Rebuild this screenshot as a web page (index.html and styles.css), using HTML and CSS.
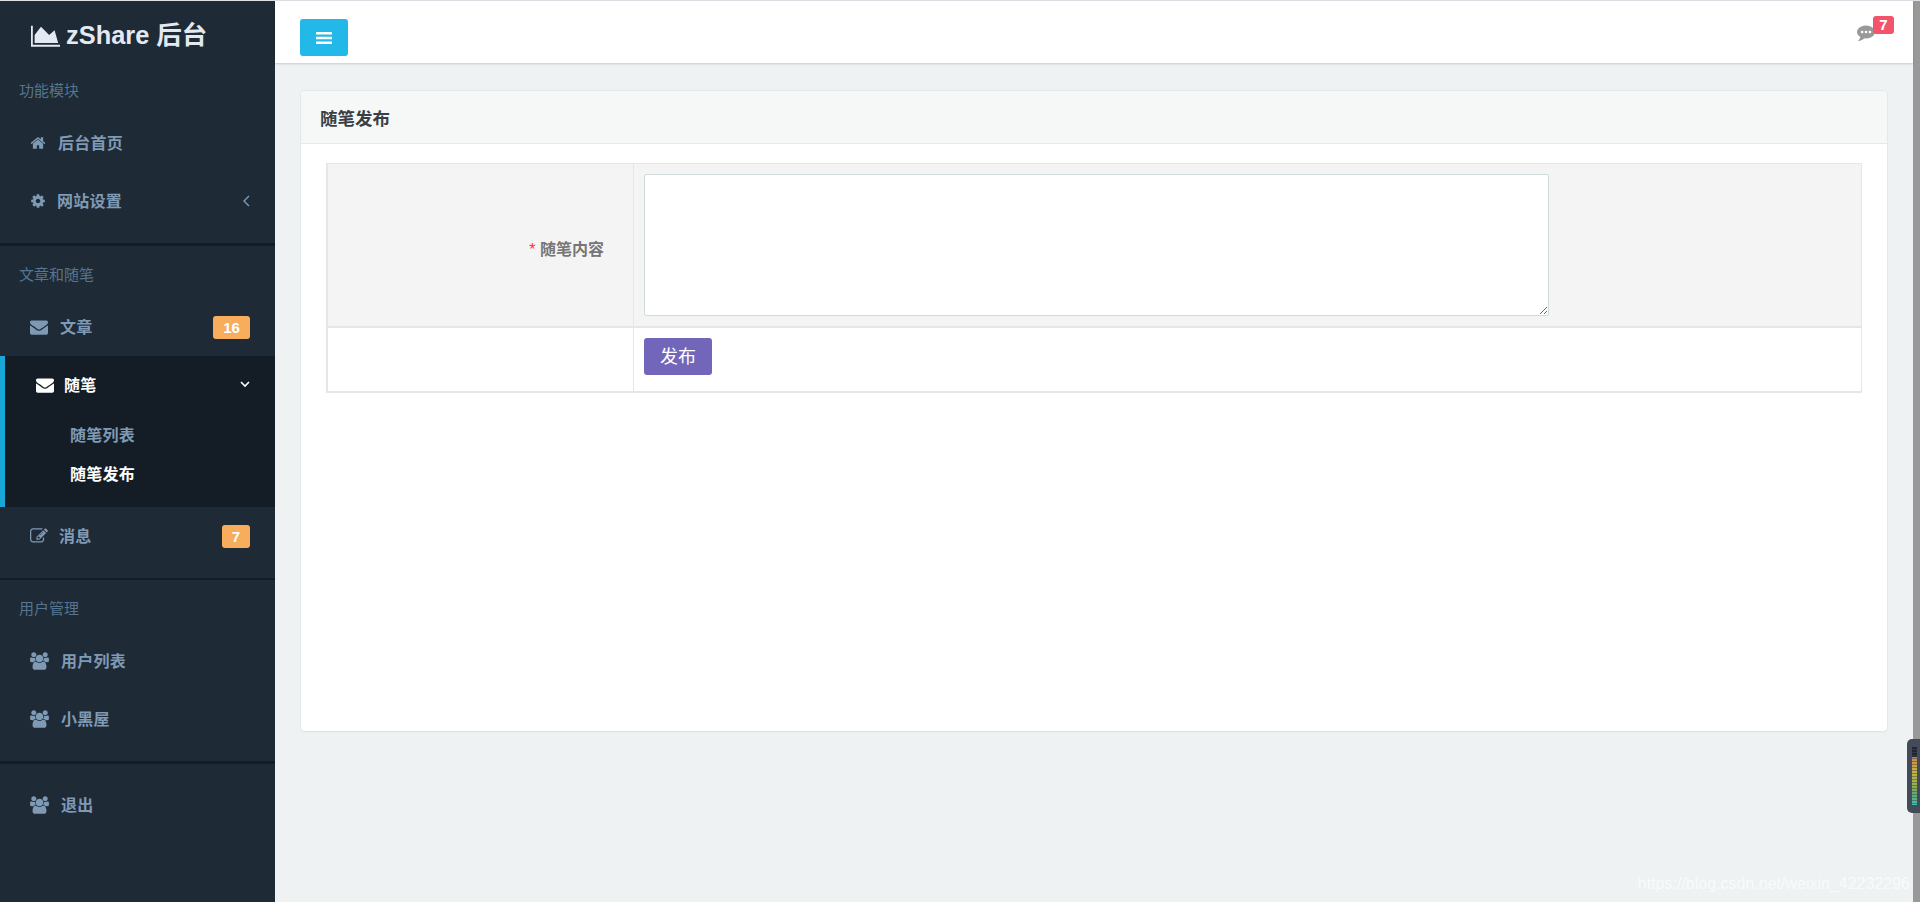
FILE: index.html
```html
<!DOCTYPE html>
<html lang="zh-CN">
<head>
<meta charset="utf-8">
<title>zShare 后台</title>
<link rel="stylesheet" href="styles.css">
</head>
<body>
<div class="page">
  <aside class="sidebar">
    <div class="logo">
      <svg class="logo-icon" viewBox="0 0 2048 1792"><path fill="currentColor" d="M2048 1536v128H0V192h128v1344h1920zm-384-1024l256 896H256V832l448-576 576 576 384-320z"/></svg>
      <span class="logo-text">zShare 后台</span>
    </div>
    <section class="nav-section">
      <div class="nav-label">功能模块</div>
      <a class="nav-item"><svg class="ic ic-home" viewBox="0 0 1792 1792"><use href="#i-home"/></svg><span class="nav-text">后台首页</span></a>
      <a class="nav-item"><svg class="ic ic-cog" viewBox="0 0 1792 1792"><use href="#i-cog"/></svg><span class="nav-text">网站设置</span>
        <svg class="chev-left" viewBox="0 0 7 12"><path d="M6 1 1 6l5 5"/></svg></a>
    </section>
    <section class="nav-section">
      <div class="nav-label">文章和随笔</div>
      <a class="nav-item"><svg class="ic ic-env" viewBox="0 0 1792 1792"><use href="#i-env"/></svg><span class="nav-text">文章</span><b class="badge badge-wide">16</b></a>
      <div class="nav-group">
        <a class="nav-item nav-head"><svg class="ic ic-env" viewBox="0 0 1792 1792"><use href="#i-env"/></svg><span class="nav-text">随笔</span>
          <svg class="chev-down" viewBox="0 0 10 7"><path d="M1 1l4 4 4-4"/></svg></a>
        <a class="sub-item">随笔列表</a>
        <a class="sub-item sub-current">随笔发布</a>
      </div>
      <a class="nav-item"><svg class="ic ic-edit" viewBox="0 0 1792 1792"><use href="#i-edit"/></svg><span class="nav-text">消息</span><b class="badge">7</b></a>
    </section>
    <section class="nav-section nav-section-thin">
      <div class="nav-label">用户管理</div>
      <a class="nav-item"><svg class="ic ic-users" viewBox="0 0 1920 1792"><use href="#i-users"/></svg><span class="nav-text">用户列表</span></a>
      <a class="nav-item"><svg class="ic ic-users" viewBox="0 0 1920 1792"><use href="#i-users"/></svg><span class="nav-text">小黑屋</span></a>
    </section>
    <section class="nav-last">
      <a class="nav-item"><svg class="ic ic-users" viewBox="0 0 1920 1792"><use href="#i-users"/></svg><span class="nav-text">退出</span></a>
    </section>
  </aside>

  <div class="content">
    <header class="topbar">
      <button class="menu-btn" type="button"><svg viewBox="0 0 16 12"><path d="M0 0h16v2.400H0zM0 4.800h16v2.400H0zM0 9.600h16V12H0z"/></svg></button>
      <div class="notice">
        <svg class="notice-icon" viewBox="0 0 1792 1792"><path fill-rule="evenodd" d="M640 896q0-53-37.500-90.500t-90.500-37.500-90.500 37.500-37.500 90.500 37.500 90.500 90.500 37.500 90.500-37.500 37.500-90.500zm384 0q0-53-37.500-90.500t-90.500-37.500-90.500 37.500-37.500 90.500 37.500 90.500 90.500 37.500 90.500-37.500 37.500-90.500zm384 0q0-53-37.500-90.500t-90.500-37.500-90.500 37.500-37.500 90.500 37.500 90.500 90.500 37.500 90.500-37.500 37.500-90.500zm384 0q0 174-120 321.500t-326 233-450 85.500q-70 0-145-8-198 175-460 242-49 14-114 22h-5q-15 0-27-10.500t-16-27.500v-1q-3-4-.5-12t2-10 4.500-9.500l6-9 7-8.500 8-9q7-8 31-34.500t34.500-38 31-39.500 32.500-51 27-59 26-76q-157-89-247.500-220t-90.500-281q0-174 120-321.500t326-233 450-85.500 450 85.500 326 233 120 321.500z"/></svg>
        <b class="notice-badge">7</b>
      </div>
    </header>
    <main class="main">
      <div class="card">
        <div class="card-head">随笔发布</div>
        <div class="card-body">
          <table class="form-table">
            <tr class="row-shaded">
              <td class="cell-label"><i class="req">*</i> 随笔内容</td>
              <td class="cell-field"><textarea class="field-text"></textarea></td>
            </tr>
            <tr class="row-action">
              <td class="cell-label"></td>
              <td class="cell-field"><button class="submit-btn" type="button">发布</button></td>
            </tr>
          </table>
        </div>
      </div>
    </main>
  </div>
  <div class="scroll-strip"></div>
</div>

<div class="meter"><div class="meter-bars"></div></div>
<div class="watermark">https://blog.csdn.net/weixin_42232296</div>

<svg class="sprite" aria-hidden="true">
  <defs>
    <path id="i-home" fill="currentColor" d="M1472 992v480q0 26-19 45t-45 19h-384v-384h-256v384h-384q-26 0-45-19t-19-45v-480q0-1 .5-3t.5-3l575-474 575 474q1 2 1 6zm223-69l-62 74q-8 9-21 11h-3q-13 0-21-7l-692-577-692 577q-12 8-24 7-13-2-21-11l-62-74q-8-10-7-23.500t11-21.500l719-599q32-26 76-26t76 26l244 204v-195q0-14 9-23t23-9h192q14 0 23 9t9 23v408l219 182q10 8 11 21.500t-7 23.500z"/>
    <path id="i-cog" fill="currentColor" d="M1152 896q0-106-75-181t-181-75-181 75-75 181 75 181 181 75 181-75 75-181zm512-109v222q0 12-8 23t-20 13l-185 28q-19 54-39 91 35 50 107 138 10 12 10 25t-9 23q-27 37-99 108t-94 71q-12 0-26-9l-138-108q-44 23-91 38-16 136-29 186-7 28-36 28h-222q-14 0-24.500-8.500t-11.500-21.500l-28-184q-49-16-90-37l-141 107q-10 9-25 9-14 0-25-11-126-114-165-168-7-10-7-23 0-12 8-23 15-21 51-66.500t54-70.500q-27-50-41-99l-183-27q-13-2-21-12.500t-8-23.500v-222q0-12 8-23t19-13l186-28q14-46 39-92-40-57-107-138-10-12-10-24 0-10 9-23 26-36 98.500-107.500t94.500-71.500q13 0 26 10l138 107q44-23 91-38 16-136 29-186 7-28 36-28h222q14 0 24.500 8.500t11.500 21.500l28 184q49 16 90 37l142-107q9-9 24-9 13 0 25 10 129 119 165 170 7 8 7 22 0 12-8 23-15 21-51 66.500t-54 70.500q26 50 41 98l183 28q13 2 21 12.500t8 23.500z"/>
    <path id="i-env" fill="currentColor" d="M1792 710v794q0 66-47 113t-113 47h-1472q-66 0-113-47t-47-113v-794q44 49 101 87 362 246 497 345 57 42 92.500 65.500t94.500 48 110 24.500h2q51 0 110-24.500t94.500-48 92.500-65.500q170-123 498-345 57-39 100-87zm0-294q0 79-49 151t-122 123q-376 261-468 325-10 7-42.500 30.500t-54 38-52 32.500-57.500 27-50 9h-2q-23 0-50-9t-57.500-27-52-32.500-54-38-42.500-30.500q-91-64-262-182.500t-205-142.500q-62-42-117-115.500t-55-136.500q0-78 41.500-130t118.500-52h1472q65 0 112.500 47t47.500 113z"/>
    <path id="i-edit" fill="currentColor" d="M888 1184l116-116-152-152-116 116v56h96v96h56zm440-720q-16-16-33 1l-350 350q-17 17-1 33t33-1l350-350q17-17 1-33zm80 594v190q0 119-84.500 203.500t-203.500 84.500h-832q-119 0-203.500-84.500t-84.500-203.500v-832q0-119 84.500-203.500t203.500-84.500h832q63 0 117 25 15 7 18 23 3 17-9 29l-49 49q-14 14-32 8-23-6-45-6h-832q-66 0-113 47t-47 113v832q0 66 47 113t113 47h832q66 0 113-47t47-113v-126q0-13 9-22l64-64q15-15 35-7t20 29zm-96-738l288 288-672 672h-288v-288zm444 132l-92 92-288-288 92-92q28-28 68-28t68 28l152 152q28 28 28 68t-28 68z"/>
    <path id="i-users" fill="currentColor" d="M593 896q-162 5-265 128h-134q-82 0-138-40.500t-56-118.500q0-353 124-353 6 0 43.500 21t97.500 42.500 119 21.500q67 0 133-23-5 37-5 66 0 139 81 256zm1071 637q0 120-73 189.500t-194 69.500h-874q-121 0-194-69.500t-73-189.500q0-53 3.500-103.500t14-109 26.500-108.500 43-97.500 62-81 85.500-53.500 111.500-20q10 0 43 21.500t73 48 107 48 135 21.500 135-21.500 107-48 73-48 43-21.500q61 0 111.500 20t85.500 53.500 62 81 43 97.500 26.500 108.500 14 109 3.500 103.500zm-1024-1277q0 106-75 181t-181 75-181-75-75-181 75-181 181-75 181 75 75 181zm704 384q0 159-112.500 271.500t-271.500 112.500-271.500-112.500-112.500-271.500 112.500-271.500 271.500-112.500 271.500 112.500 112.500 271.500zm576 225q0 78-56 118.500t-138 40.500h-134q-103-123-265-128 81-117 81-256 0-29-5-66 66 23 133 23 59 0 119-21.500t97.500-42.500 43.500-21q124 0 124 353zm-128-609q0 106-75 181t-181 75-181-75-75-181 75-181 181-75 181 75 75 181z"/>
  </defs>
</svg>
</body>
</html>
```
FILE: styles.css
```css
* { box-sizing: border-box; }
html, body { margin: 0; height: 100%; overflow: hidden; }
body {
  font-family: "Liberation Sans", "Noto Sans CJK SC", sans-serif;
  font-size: 14px;
  background: #eef2f3;
  color: #3a3f45;
}
.sprite { width: 0; height: 0; position: absolute; }
.page {
  display: flex;
  height: 100vh;
  border-top: 1px solid #dde0e5;
}

/* sidebar */
.sidebar {
  width: 275px;
  flex: none;
  background: #1e2a35;
  color: #7f9ab5;
}
.logo {
  height: 61px;
  padding: 5px 0 0 31px;
  display: flex;
  align-items: center;
  gap: 6px;
  color: #e4e9f1;
  font-size: 25.4px;
  font-weight: 700;
}
.logo-icon { width: 29px; height: 25.6px; flex: none; margin-top: 3px; }
.logo-text { margin-top: -2px; }
.nav-section { padding: 19px 0 13px; border-bottom: 3px solid #141d25; }
.nav-section-thin { border-bottom-width: 3px; }
.nav-section:nth-of-type(2) { border-bottom-width: 2px; }
.nav-last { padding-top: 12px; }
.nav-label {
  height: 20px;
  line-height: 20px;
  margin: 0 0 13px 19px;
  font-size: 15px;
  color: #557590;
}
.nav-item {
  display: flex;
  align-items: center;
  height: 58px;
  padding: 0 25px 0 30px;
  font-size: 16px;
  font-weight: 700;
}
.nav-text { margin-top: -2px; letter-spacing: .25px; }
.ic { flex: none; width: 16px; height: 16px; }
.ic-home { margin-right: 12px; }
.ic-cog { margin-right: 11px; }
.ic-env { width: 18px; height: 18px; margin-right: 12px; }
.ic-edit { width: 18px; height: 18px; margin-right: 11px; }
.ic-users { width: 19px; height: 18px; margin-right: 12px; }
.chev-left {
  width: 7px; height: 12px; margin-left: auto;
  fill: none; stroke: currentColor; stroke-width: 1.4;
}
.chev-down {
  width: 10px; height: 7px; margin-left: auto; margin-top: -1px;
  fill: none; stroke: #fff; stroke-width: 1.6;
}
.badge {
  margin-left: auto;
  min-width: 28px;
  height: 23px;
  line-height: 23px;
  border-radius: 3px;
  text-align: center;
  background: #f8ad5d;
  color: #fff;
  font-size: 15px;
}
.badge-wide { min-width: 37px; }
.nav-group {
  height: 151px;
  background: #141d25;
  border-left: 5px solid #17a8d8;
}
.nav-head { height: 57px; padding-left: 31px; color: #fff; margin-bottom: 3px; }
.nav-head .ic-env { margin-right: 10px; }
.sub-item {
  display: block;
  height: 39px;
  line-height: 39px;
  padding-left: 65px;
  font-size: 16px;
  font-weight: 700;
  letter-spacing: .25px;
  color: #7f9ab5;
}
.sub-current { color: #fff; }

/* content */
.content { flex: 1; min-width: 0; display: flex; flex-direction: column; }
.topbar {
  height: 62px;
  flex: none;
  display: flex;
  align-items: flex-start;
  justify-content: space-between;
  background: #fff;
  box-shadow: 0 1px 2px rgba(0, 0, 0, .16);
  padding: 18px 19px 0 25px;
  position: relative;
}
.menu-btn {
  width: 48px;
  height: 37px;
  border: 0;
  padding: 0;
  border-radius: 3px;
  background: #22b8e8;
  display: flex;
  align-items: center;
  justify-content: center;
}
.menu-btn svg { width: 16px; height: 12px; fill: #fff; }
.notice { position: relative; width: 37px; height: 26px; margin-top: -3px; }
.notice-icon { position: absolute; left: 0; top: 7px; width: 18px; height: 18px; fill: #999; }
.notice-badge {
  position: absolute;
  left: 16px;
  top: 0;
  width: 21px;
  height: 18px;
  line-height: 18px;
  text-align: center;
  border-radius: 3px;
  background: #f2556b;
  color: #fff;
  font-size: 15px;
}
.main { flex: 1; padding: 28px 26px 0; }
.card {
  height: 640px;
  background: #fff;
  border-radius: 4px;
  box-shadow: 0 0 0 1px rgba(222, 230, 234, .7), 0 1px 1px rgba(190, 205, 215, .5);
}
.card-head {
  height: 53px;
  line-height: 57px;
  padding-left: 19px;
  background: #f6f8f8;
  border-bottom: 1px solid #e4e9ec;
  border-radius: 4px 4px 0 0;
  font-size: 17.5px;
  font-weight: 700;
}
.card-body { padding: 19px 25px 0; }
.form-table {
  width: 100%;
  border-collapse: separate;
  border-spacing: 0;
  table-layout: fixed;
  border: 2px solid #e6e6e6;
  border-top-width: 1px;
  border-right-width: 1px;
}
.form-table td { padding: 0; vertical-align: top; }
.cell-label {
  width: 306px;
  border-right: 1px solid #e6e6e6;
  text-align: right;
  padding-right: 29px !important;
  font-size: 16px;
  font-weight: 700;
  color: #767676;
}
.row-shaded td { background: #f4f4f4; border-bottom: 2px solid #e6e6e6; }
.row-shaded .cell-label { vertical-align: middle; padding-top: 5px !important; }
.req { font-style: normal; font-weight: 400; color: #f33; }
.cell-field { padding: 10px 0 10px 10px !important; }
.row-action .cell-field { padding-bottom: 16px !important; }
.field-text {
  display: block;
  width: 905px;
  height: 142px;
  border: 1px solid #cfdadd;
  border-radius: 2px;
  background: #fff;
  outline: 0;
}
.submit-btn {
  display: block;
  width: 68px;
  height: 37px;
  border: 0;
  padding: 0 0 4px;
  border-radius: 3px;
  background: #7266ba;
  color: #fff;
  font: 18px "Liberation Sans", "Noto Sans CJK SC", sans-serif;
}

/* overlays and the window's own strip */
.scroll-strip { width: 7px; flex: none; background: #999; }
.meter {
  position: absolute;
  left: 1907px;
  top: 739px;
  width: 13px;
  height: 74px;
  background: #434b5b;
  border-radius: 5px 0 0 5px;
  padding: 8px 0 0 5px;
}
.meter-bars {
  width: 5px;
  height: 58px;
  background:
    repeating-linear-gradient(to bottom, transparent 0 2px, rgba(67, 75, 91, .55) 2px 3px),
    linear-gradient(to bottom, #20262f 0 18%, #d0834b 18%, #c9b23a 40%, #a5b53f 60%, #6aa866 80%, #3cc4a8 100%);
}
.watermark {
  position: absolute;
  right: 10px;
  top: 874px;
  font-size: 16px;
  line-height: 20px;
  color: rgba(255, 255, 255, .55);
  text-shadow: 0 0 1px rgba(255, 255, 255, .3);
}
```
